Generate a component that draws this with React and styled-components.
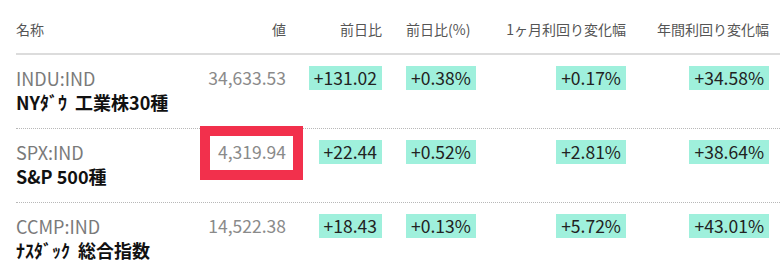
import React from 'react';
import styled, { createGlobalStyle } from 'styled-components';

const GlobalStyle = createGlobalStyle`
  html, body {
    margin: 0;
    padding: 0;
    background: #fff;
  }
  body {
    font-family: "Noto Sans CJK JP", "Noto Sans", sans-serif;
  }
`;

const Page = styled.div`
  width: 780px;
  height: 275px;
  overflow: hidden;
  padding-left: 16px;
  box-sizing: border-box;
`;

const Row = styled.div`
  display: grid;
  grid-template-columns: 170px 100px 96px 88px 156px 143px;
  padding-right: 11px;
  align-items: start;
  border-bottom: ${({ head }) => (head ? '2px solid #dcdcdc' : '1px dotted #b8b8b8')};
  height: ${({ head }) => (head ? '53px' : '62px')};
  padding-top: ${({ head }) => (head ? '0' : '11px')};
  box-sizing: content-box;
  ${({ last }) => last && 'border-bottom: none;'}
`;

const HeadCell = styled.div`
  font-size: 14px;
  color: #555;
  line-height: 20px;
  padding-top: 19px;
  text-align: ${({ align }) => align || 'right'};
  padding-left: ${({ indent }) => indent || 0};
  white-space: nowrap;
`;

const Cell = styled.div`
  text-align: ${({ align }) => align || 'right'};
  padding-left: ${({ indent }) => indent || 0};
  white-space: nowrap;
`;

const Code = styled.div`
  font-size: 18px;
  line-height: 24px;
  color: #7a7a7a;
`;

const Name = styled.div`
  font-size: 18px;
  line-height: 24px;
  font-weight: 600;
  color: #111;
  word-spacing: ${({ wide }) => (wide ? '4px' : '0')};
`;

const Value = styled.span`
  position: relative;
  display: inline-block;
  font-size: 17.5px;
  line-height: 24px;
  color: #8a8a8a;
  ${({ marked }) => marked && `
    &::after {
      content: '';
      position: absolute;
      left: -18px;
      right: -17px;
      top: -14px;
      bottom: -16px;
      border: 10px solid #f2304c;
    }
  `}
`;

const Pill = styled.span`
  display: inline-block;
  background: #9ff0dc;
  color: #222;
  font-size: 17.5px;
  line-height: 24px;
  padding: 0 5px;
`;

const rows = [
  { code: 'INDU:IND', name: 'NYﾀﾞｳ 工業株30種', wide: true, value: '34,633.53', diff: '+131.02', pct: '+0.38%', month: '+0.17%', year: '+34.58%' },
  { code: 'SPX:IND', name: 'S&P 500種', value: '4,319.94', diff: '+22.44', pct: '+0.52%', month: '+2.81%', year: '+38.64%', marked: true },
  { code: 'CCMP:IND', name: 'ﾅｽﾀﾞｯｸ 総合指数', wide: true, value: '14,522.38', diff: '+18.43', pct: '+0.13%', month: '+5.72%', year: '+43.01%' },
];

const App = () => {
  return (
    <Page>
      <GlobalStyle />
      <Row head>
        <HeadCell align="left">名称</HeadCell>
        <HeadCell>値</HeadCell>
        <HeadCell>前日比</HeadCell>
        <HeadCell align="left" indent="24px">前日比(%)</HeadCell>
        <HeadCell>1ヶ月利回り変化幅</HeadCell>
        <HeadCell>年間利回り変化幅</HeadCell>
      </Row>
      {rows.map((r, i) => (
        <Row key={r.code} last={i === rows.length - 1}>
          <Cell align="left">
            <Code>{r.code}</Code>
            <Name wide={r.wide}>{r.name}</Name>
          </Cell>
          <Cell>
            <Value marked={r.marked}>{r.value}</Value>
          </Cell>
          <Cell><Pill>{r.diff}</Pill></Cell>
          <Cell align="left" indent="24px"><Pill>{r.pct}</Pill></Cell>
          <Cell><Pill>{r.month}</Pill></Cell>
          <Cell><Pill>{r.year}</Pill></Cell>
        </Row>
      ))}
    </Page>
  );
};

export default App;
